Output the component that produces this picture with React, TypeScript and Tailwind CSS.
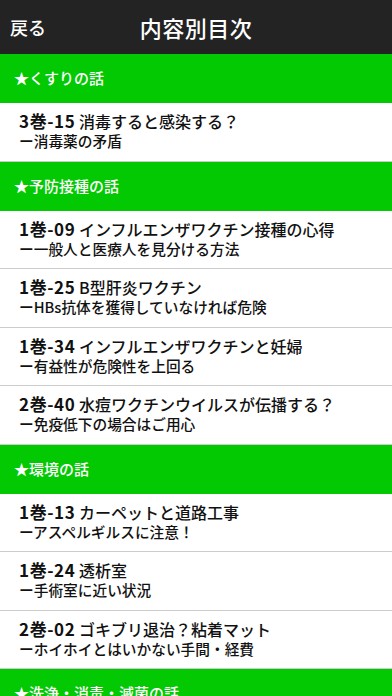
const SECTIONS = [
  {
    title: '★くすりの話',
    items: [{ code: '3巻-15', title: '消毒すると感染する？', sub: 'ー消毒薬の矛盾' }],
  },
  {
    title: '★予防接種の話',
    items: [
      { code: '1巻-09', title: 'インフルエンザワクチン接種の心得', sub: 'ー一般人と医療人を見分ける方法' },
      { code: '1巻-25', title: 'B型肝炎ワクチン', sub: 'ーHBs抗体を獲得していなければ危険' },
      { code: '1巻-34', title: 'インフルエンザワクチンと妊婦', sub: 'ー有益性が危険性を上回る' },
      { code: '2巻-40', title: '水痘ワクチンウイルスが伝播する？', sub: 'ー免疫低下の場合はご用心' },
    ],
  },
  {
    title: '★環境の話',
    items: [
      { code: '1巻-13', title: 'カーペットと道路工事', sub: 'ーアスペルギルスに注意！' },
      { code: '1巻-24', title: '透析室', sub: 'ー手術室に近い状況' },
      { code: '2巻-02', title: 'ゴキブリ退治？粘着マット', sub: 'ーホイホイとはいかない手間・経費' },
    ],
  },
  { title: '★洗浄・消毒・滅菌の話', items: [] },
]

export default function App() {
  return (
    <div
      className="w-[392px] h-[696px] overflow-hidden bg-white"
      style={{ fontFamily: '"Noto Sans CJK JP", "Noto Sans", sans-serif' }}
    >
      <div className="relative flex items-center justify-center h-[54px] bg-[#232323] text-white">
        <button className="absolute left-[10px] text-[18px] font-medium leading-none">戻る</button>
        <h1 className="text-[22px] font-medium leading-none tracking-[0.5px]">内容別目次</h1>
      </div>

      {SECTIONS.map((s) => (
        <div key={s.title}>
          <div className="flex items-center h-[49px] px-[14px] bg-[#02c902] text-white text-[15px] font-medium">
            {s.title}
          </div>
          {s.items.map((it) => (
            <div
              key={it.code}
              className="flex flex-col justify-center h-[58.5px] px-[19px] pb-[1px] border-b border-[#cdcdcd] text-[#111]"
            >
              <div className="text-[16px] leading-[20px] font-medium whitespace-nowrap">
                <span className="text-[17px] font-bold tracking-[0.6px]">{it.code}</span> {it.title}
              </div>
              <div className="text-[14.7px] leading-[20px] font-medium whitespace-nowrap">{it.sub}</div>
            </div>
          ))}
        </div>
      ))}
    </div>
  )
}
